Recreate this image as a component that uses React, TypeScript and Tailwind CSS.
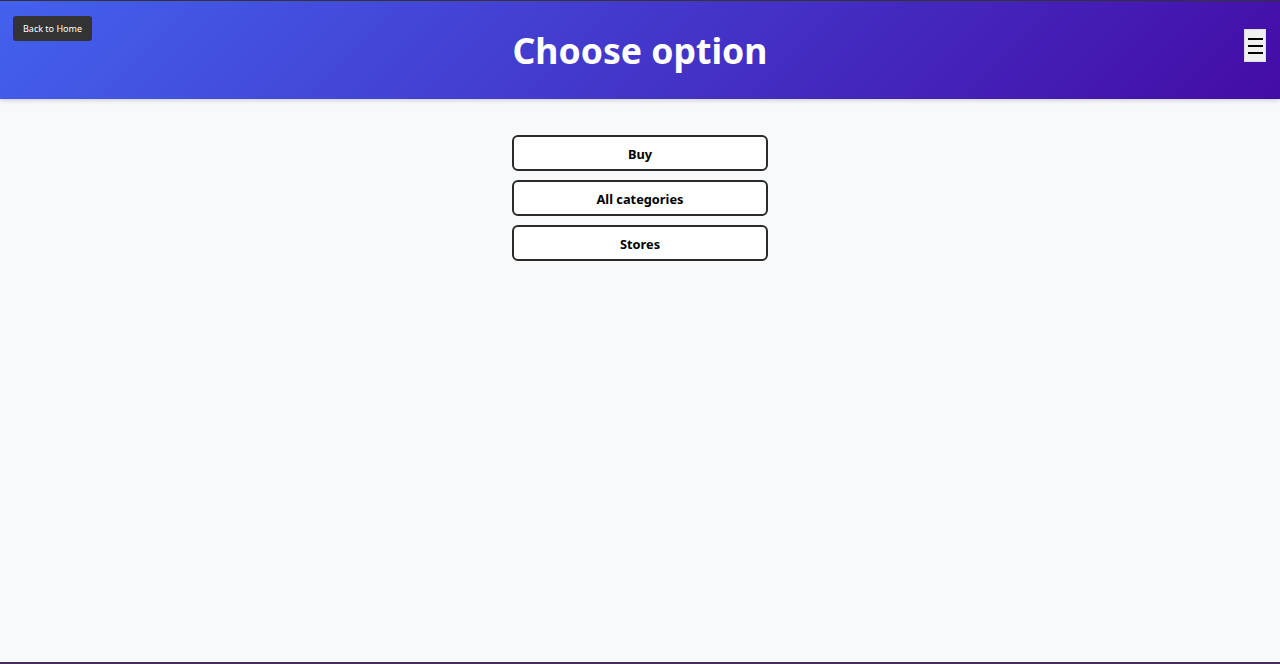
import React from "react";

export default function App() {
  return (
    <div className="w-[1280px] h-[664px] bg-[#f8f9fa] flex flex-col border-t border-[#333] border-b-2 border-b-[#4a2a5a] overflow-hidden" style={{ fontFamily: '"Noto Sans", "Open Sans", sans-serif' }}>
      <header className="relative h-[98px] shrink-0 bg-[linear-gradient(135deg,#4361ee,#440ca6)] shadow-[0_2px_4px_rgba(0,0,0,0.15)] flex items-center justify-center">
        <button className="absolute left-[13px] top-[15px] h-[25px] px-[10px] bg-[#333] text-white text-[9px] rounded-[3px] leading-none">
          Back to Home
        </button>
        <h1 className="text-white font-bold text-[35.6px] leading-none mt-[2px]">Choose option</h1>
        <button className="absolute right-[14px] top-[28px] w-[22px] h-[33px] bg-[#f0f0f0] border border-[#ddd] flex flex-col items-center justify-center gap-[5px]">
          <span className="block w-[15px] h-[2px] bg-black" />
          <span className="block w-[15px] h-[2px] bg-black" />
          <span className="block w-[15px] h-[2px] bg-black" />
        </button>
      </header>
      <main className="flex flex-col items-center pt-[36px] gap-[9px]">
        {["Buy", "All categories", "Stores"].map((t) => (
          <button key={t} className="w-[256px] h-[36px] pt-[3px] bg-white border-2 border-[#2a2a2a] rounded-[6px] text-[12.8px] font-bold text-black">
            {t}
          </button>
        ))}
      </main>
    </div>
  );
}
